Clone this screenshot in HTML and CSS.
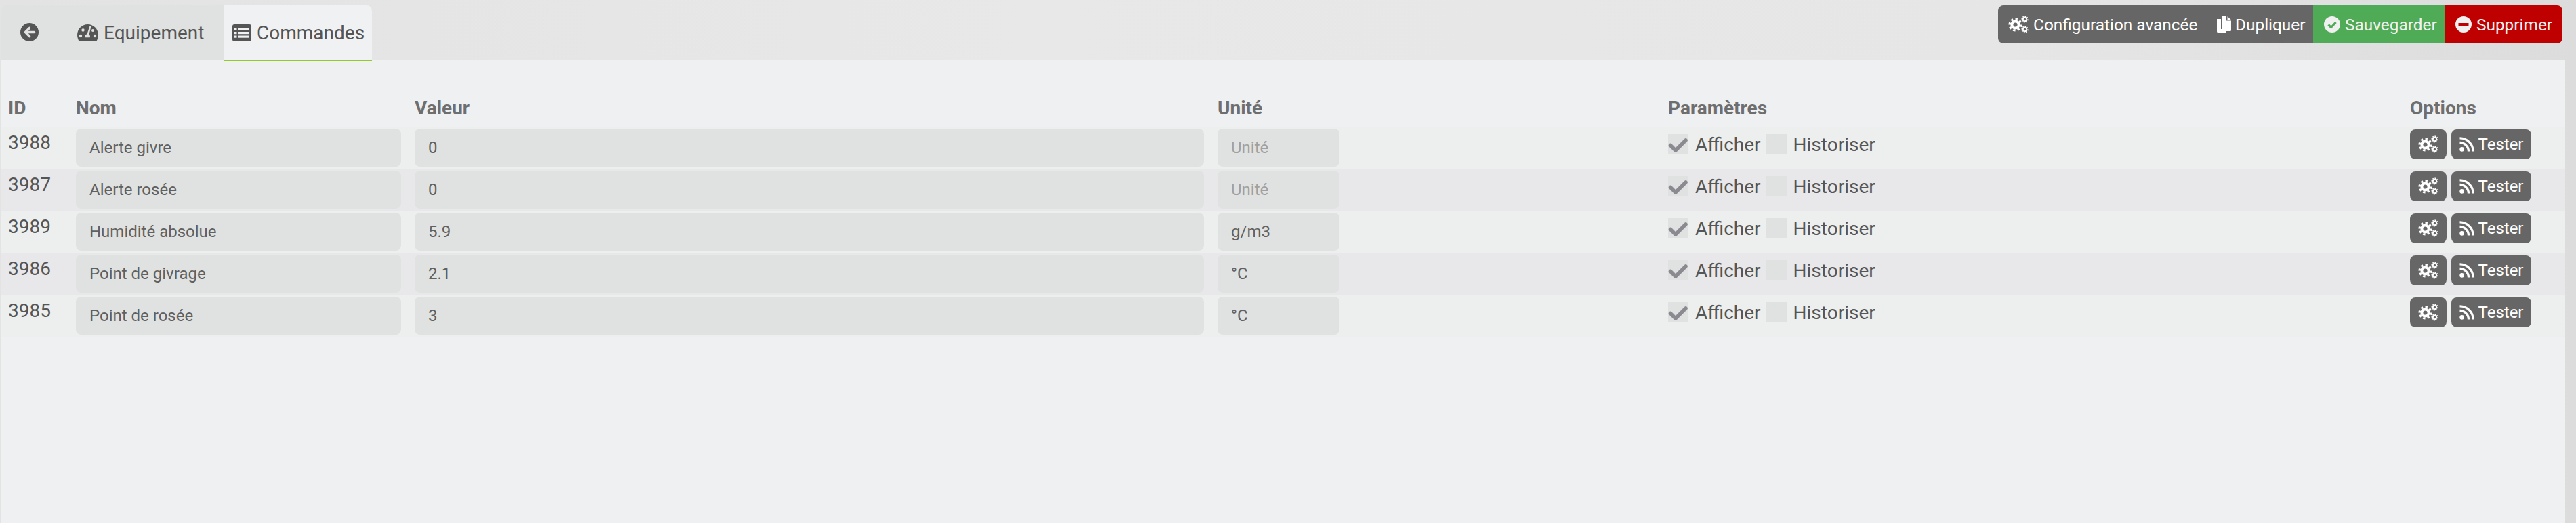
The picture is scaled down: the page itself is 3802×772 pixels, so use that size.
FILE: index.html
```html
<!DOCTYPE html>
<html lang="fr">
<head>
<meta charset="utf-8">
<title>Commandes</title>
<link rel="stylesheet" href="styles.css">
</head>
<body>
<svg class="defs" width="0" height="0" aria-hidden="true">
  <symbol id="i-cogs" viewBox="0 0 30 26">
    <g fill="none" stroke="currentColor">
      <circle cx="10.5" cy="13.5" r="5.1" stroke-width="4"/>
      <circle cx="10.5" cy="13.5" r="8.4" stroke-width="3.4" pathLength="16" stroke-dasharray="1 1"/>
      <circle cx="24.5" cy="5.5" r="2.7" stroke-width="1.9"/>
      <circle cx="24.5" cy="5.5" r="4.3" stroke-width="1.7" pathLength="16" stroke-dasharray="1 1"/>
      <circle cx="24.5" cy="20.5" r="2.7" stroke-width="1.9"/>
      <circle cx="24.5" cy="20.5" r="4.3" stroke-width="1.7" pathLength="16" stroke-dasharray="1 1"/>
    </g>
  </symbol>
  <symbol id="i-rss" viewBox="0 0 22 22">
    <circle cx="3.6" cy="18.4" r="3.3" fill="currentColor"/>
    <path d="M0.5 8.5a13 13 0 0 1 13 13M0.5 1.800a19.700 19.700 0 0 1 19.700 19.700" fill="none" stroke="currentColor" stroke-width="3.300"/>
  </symbol>
  <symbol id="i-check" viewBox="0 0 30 30">
    <path d="M3.500 16.500 11 24 26 9" fill="none" stroke="currentColor" stroke-width="5.500" stroke-linecap="round" stroke-linejoin="round"/>
  </symbol>
</svg>

<div class="page">
  <header class="topbar">
    <nav class="tabs">
      <a class="tab tab-back">
        <svg class="icon-back" viewBox="0 0 27 27"><circle cx="13.500" cy="13.500" r="13.500" fill="currentColor"/><path d="M20.500 13.500H8M13.500 7.500l-6 6 6 6" fill="none" stroke="#e0e2e1" stroke-width="3.600" stroke-linecap="round" stroke-linejoin="round"/></svg>
      </a>
      <a class="tab tab-equip">
        <svg class="icon-gauge" viewBox="0 0 31 25"><path d="M15.500 0C7 0 0 7 0 15.500c0 3.300 1 6.500 2.800 9.500h25.400c1.800-3 2.800-6.200 2.800-9.500C31 7 24 0 15.500 0z" fill="currentColor"/><g fill="#e0e2e1"><circle cx="5" cy="17" r="2.200"/><circle cx="8.500" cy="8.500" r="2.200"/><circle cx="26" cy="17" r="2.200"/><circle cx="23" cy="9" r="2"/><path d="M18.500 2.500l2 .8-3 11.500c1.500 1.200 1.900 3 1.200 4.500h-7c-.8-2 .2-4.200 2.800-5z"/></g></svg>
        <span>Equipement</span>
      </a>
      <a class="tab tab-active">
        <svg class="icon-list" viewBox="0 0 28 25"><rect width="28" height="25" rx="3" fill="currentColor"/><g fill="#f0f1f3"><rect x="3" y="5.500" width="3.500" height="3.200"/><rect x="3" y="11" width="3.500" height="3.200"/><rect x="3" y="16.500" width="3.500" height="3.200"/><rect x="8.500" y="5.500" width="16.500" height="3.200"/><rect x="8.500" y="11" width="16.500" height="3.200"/><rect x="8.500" y="16.500" width="16.500" height="3.200"/></g></svg>
        <span>Commandes</span>
      </a>
    </nav>
    <div class="actions">
      <a class="action action-grey action-config"><svg class="icon-cogs"><use href="#i-cogs"/></svg><span>Configuration avancée</span></a>
      <a class="action action-grey action-dup">
        <svg class="icon-copy" viewBox="0 0 21 24"><path d="M0 4h6v15h7v5H1.500A1.500 1.500 0 0 1 0 22.500z" fill="currentColor"/><path d="M7.500 0H14v6.500h7v14a1.500 1.500 0 0 1-1.500 1.500H9A1.500 1.500 0 0 1 7.500 20.500z" fill="currentColor"/><path d="M15.500.3 20.700 5h-5.200z" fill="currentColor"/></svg>
        <span>Dupliquer</span>
      </a>
      <a class="action action-green">
        <svg class="icon-round" viewBox="0 0 24 24"><circle cx="12" cy="12" r="12" fill="currentColor"/><path d="M6.500 12.500l4 4 7-7.500" fill="none" stroke="#4fab55" stroke-width="3.200"/></svg>
        <span>Sauvegarder</span>
      </a>
      <a class="action action-red">
        <svg class="icon-round" viewBox="0 0 24 24"><circle cx="12" cy="12" r="12" fill="currentColor"/><rect x="4.500" y="10" width="15" height="4.500" fill="#bf0000"/></svg>
        <span>Supprimer</span>
      </a>
    </div>
  </header>

  <main class="panel">
    <div class="grid-row head">
      <div>ID</div><div>Nom</div><div>Valeur</div><div>Unité</div><div>Paramètres</div><div>Options</div>
    </div>

    <div class="grid-row row">
      <div class="cell-id">3988</div>
      <div class="field">Alerte givre</div>
      <div class="field">0</div>
      <div class="field field-unit placeholder">Unité</div>
      <div class="params"><span class="box"><svg class="icon-check"><use href="#i-check"/></svg></span><span class="lbl">Afficher</span><span class="box box2"></span><span class="lbl">Historiser</span></div>
      <div class="opts"><a class="btn btn-cog"><svg class="icon-cogs"><use href="#i-cogs"/></svg></a><a class="btn btn-test"><svg class="icon-rss"><use href="#i-rss"/></svg><span>Tester</span></a></div>
    </div>
    <div class="grid-row row">
      <div class="cell-id">3987</div>
      <div class="field">Alerte rosée</div>
      <div class="field">0</div>
      <div class="field field-unit placeholder">Unité</div>
      <div class="params"><span class="box"><svg class="icon-check"><use href="#i-check"/></svg></span><span class="lbl">Afficher</span><span class="box box2"></span><span class="lbl">Historiser</span></div>
      <div class="opts"><a class="btn btn-cog"><svg class="icon-cogs"><use href="#i-cogs"/></svg></a><a class="btn btn-test"><svg class="icon-rss"><use href="#i-rss"/></svg><span>Tester</span></a></div>
    </div>
    <div class="grid-row row">
      <div class="cell-id">3989</div>
      <div class="field">Humidité absolue</div>
      <div class="field">5.9</div>
      <div class="field field-unit">g/m3</div>
      <div class="params"><span class="box"><svg class="icon-check"><use href="#i-check"/></svg></span><span class="lbl">Afficher</span><span class="box box2"></span><span class="lbl">Historiser</span></div>
      <div class="opts"><a class="btn btn-cog"><svg class="icon-cogs"><use href="#i-cogs"/></svg></a><a class="btn btn-test"><svg class="icon-rss"><use href="#i-rss"/></svg><span>Tester</span></a></div>
    </div>
    <div class="grid-row row">
      <div class="cell-id">3986</div>
      <div class="field">Point de givrage</div>
      <div class="field">2.1</div>
      <div class="field field-unit">°C</div>
      <div class="params"><span class="box"><svg class="icon-check"><use href="#i-check"/></svg></span><span class="lbl">Afficher</span><span class="box box2"></span><span class="lbl">Historiser</span></div>
      <div class="opts"><a class="btn btn-cog"><svg class="icon-cogs"><use href="#i-cogs"/></svg></a><a class="btn btn-test"><svg class="icon-rss"><use href="#i-rss"/></svg><span>Tester</span></a></div>
    </div>
    <div class="grid-row row">
      <div class="cell-id">3985</div>
      <div class="field">Point de rosée</div>
      <div class="field">3</div>
      <div class="field field-unit">°C</div>
      <div class="params"><span class="box"><svg class="icon-check"><use href="#i-check"/></svg></span><span class="lbl">Afficher</span><span class="box box2"></span><span class="lbl">Historiser</span></div>
      <div class="opts"><a class="btn btn-cog"><svg class="icon-cogs"><use href="#i-cogs"/></svg></a><a class="btn btn-test"><svg class="icon-rss"><use href="#i-rss"/></svg><span>Tester</span></a></div>
    </div>
  </main>
</div>
</body>
</html>
```
FILE: styles.css
```css
* { box-sizing: border-box; }
html, body { margin: 0; height: 100%; }
body {
  overflow: hidden;
  font-family: Roboto, "Liberation Sans", sans-serif;
  color: #555;
  background: linear-gradient(to right, #e3e3e3 0%, #e8e8e8 40%, #e6e6e6 78%, #dcdcdc 100%);
}
.defs { position: absolute; }
.page { height: 772px; padding-right: 16px; padding-left: 2px; display: flex; flex-direction: column; }

.topbar { height: 88px; padding-top: 8px; display: flex; justify-content: space-between; align-items: flex-start; flex: none; }
.tabs { display: flex; height: 80px; }
.tab { display: flex; align-items: center; font-size: 28px; color: #555; background: #e0e2e1; }
.tab-back { width: 78px; padding-left: 28px; border-top-left-radius: 8px; }
.icon-back { width: 27px; height: 27px; margin-top: -1px; }
.tab-equip { width: 251px; padding-left: 34px; }
.icon-gauge { width: 31px; height: 25px; margin-right: 8px; }
.tab-active {
  width: 218px;
  padding-left: 12px;
  background: #f0f1f3;
  border-top-right-radius: 8px;
  box-shadow: 0 2px 0 #93ca2a;
  position: relative;
}
.icon-list { width: 28px; height: 25px; margin-right: 8px; }

.actions { display: flex; height: 56px; margin-right: 4px; font-size: 24.4px; color: #fff; }
.action { display: flex; align-items: center; height: 56px; }
.action-grey { background: #666; }
.action-config { width: 313px; padding-left: 15px; border-radius: 8px 0 0 8px; }
.action-dup { width: 152px; padding-left: 10px; }
.action-green { width: 194px; padding-left: 16px; background: #4fab55; color: #f0f0f0; }
.action-red { width: 174px; padding-left: 16px; background: #bf0000; color: #f0f0f0; border-radius: 0 8px 8px 0; }
.icon-cogs { width: 30px; height: 26px; margin-right: 7px; }
.icon-copy { width: 21px; height: 24px; margin-right: 6px; }
.icon-round { width: 24px; height: 24px; margin-right: 7px; }

.panel { flex: 1; background: #eff0f2; }
.grid-row {
  display: grid;
  grid-template-columns: 80px 480px 1165px 645px 1075px 1fr;
  column-gap: 20px;
  padding-left: 10px;
}
.head { height: 100px; padding-top: 51px; font-size: 28px; font-weight: 700; color: #6e6e6e; line-height: 42px; }
.row { height: 62px; align-items: start; font-size: 28px; }
.row:nth-child(even) { background: #edefee; }
.row:nth-child(odd) { background: #e8e8ea; }
.cell-id { padding-top: 2px; line-height: 42px; }
.field {
  height: 56px;
  margin-top: 2px;
  padding-left: 20px;
  line-height: 56px;
  font-size: 24px;
  color: #606060;
  background: #e0e2e1;
  border-radius: 8px;
}
.field-unit { width: 180px; }
.placeholder { color: #a0a0a0; }
.params { display: flex; align-items: center; height: 42px; margin-top: 4px; white-space: nowrap; }
.box { width: 30px; height: 30px; background: #e0e2e1; flex: none; display: block; }
.box2 { margin-left: 8px; }
.lbl { margin-left: 10px; }
.icon-check { display: block; width: 30px; height: 30px; color: #8a8a90; }
.opts { display: flex; margin-top: 3px; color: #fff; }
.btn { display: flex; align-items: center; justify-content: center; height: 44px; background: #666; border-radius: 8px; font-size: 24px; }
.btn-cog { width: 54px; }
.btn-cog .icon-cogs { margin-right: 0; }
.btn-test { width: 118px; margin-left: 7px; }
.icon-rss { width: 22px; height: 22px; margin-right: 6px; }
```
